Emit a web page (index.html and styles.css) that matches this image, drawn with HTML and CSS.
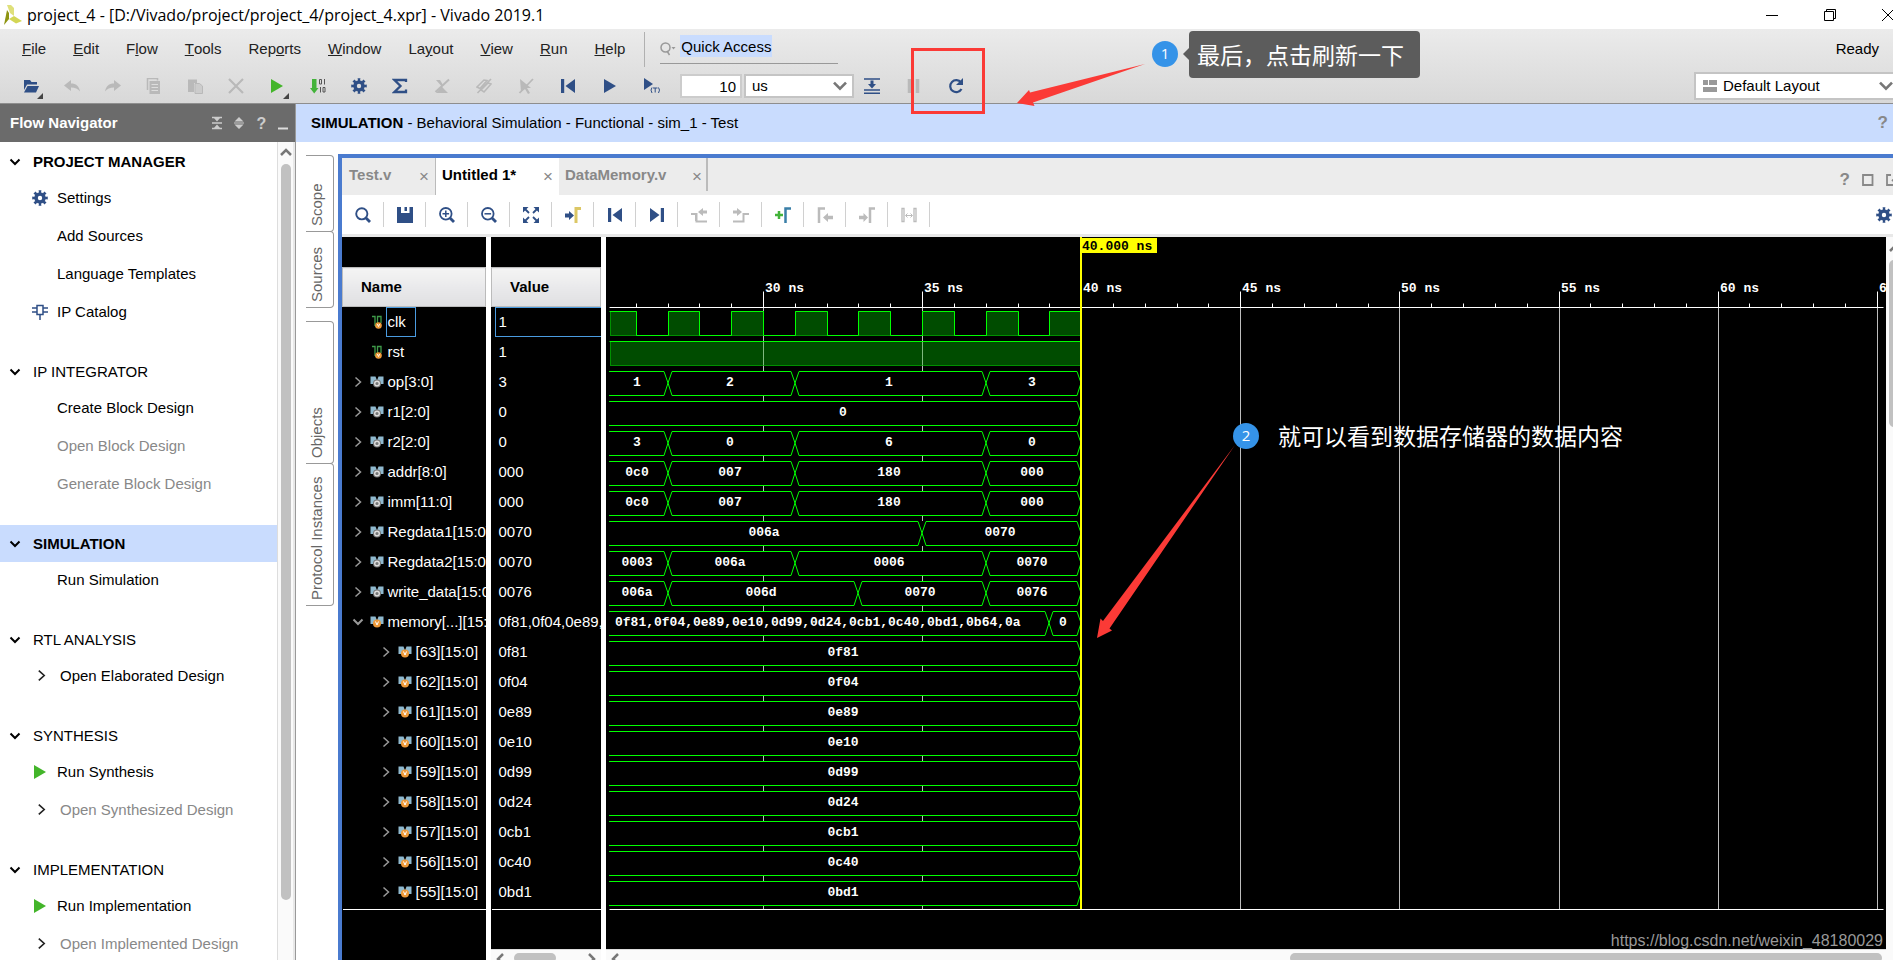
FILE: index.html
```html
<!DOCTYPE html>
<html lang="en">
<head>
<meta charset="utf-8">
<title>project_4 - Vivado 2019.1</title>
<link rel="stylesheet" href="styles.css">
</head>
<body>
<svg class="defs" aria-hidden="true">
  <defs>
    <symbol id="gear" viewBox="0 0 16 16"><circle cx="8" cy="8" r="4" fill="none" stroke="currentColor" stroke-width="3.6"/><circle cx="8" cy="8" r="6.4" fill="none" stroke="currentColor" stroke-width="2.8" pathLength="16" stroke-dasharray="1 1" stroke-dashoffset=".5"/></symbol>
    <symbol id="down" viewBox="0 0 12 12"><path d="M1.5 3.5 6 8l4.5-4.5" fill="none" stroke="currentColor" stroke-width="2"/></symbol>
    <symbol id="right" viewBox="0 0 12 12"><path d="M3.5 1.5 8.500 6l-5 4.500" fill="none" stroke="currentColor" stroke-width="1.5"/></symbol>
    <symbol id="play" viewBox="0 0 16 16"><path d="M2 1 14 8 2 15z" fill="currentColor"/></symbol>
    <symbol id="first" viewBox="0 0 16 16"><path d="M1 1h3.200v14H1zM15 1v14L5.500 8z" fill="currentColor"/></symbol>
    <symbol id="last" viewBox="0 0 16 16"><path d="M15 1h-3.200v14H15zM1 1v14l9.500-7z" fill="currentColor"/></symbol>
    <symbol id="chip" viewBox="0 0 16 16"><path d="M5 1.500h6v9H5zM8 10.500V16M0 4h5M0 8h5M11 4h5M11 8h5" fill="none" stroke="currentColor" stroke-width="1.500"/></symbol>
    <symbol id="bit" viewBox="0 0 12 14"><path d="M1 1.500h3v9.500M6.500 11V1.500h3.500V8M4 11h3" fill="none" stroke="#3f9b4a" stroke-width="1.300"/><circle cx="7.500" cy="10.500" r="3.300" fill="#ee9a3a"/><path d="m6.300 9 1.200 2.500L8.700 9" fill="none" stroke="#fff" stroke-width=".9"/></symbol>
    <symbol id="busin" viewBox="0 0 14 12"><path d="M.5.5h5L7 4.500 8.500.5h5v7.500H.5z" fill="#8fb9cf"/><circle cx="7" cy="7.500" r="4" fill="#777"/><circle cx="7" cy="7.500" r="2.300" fill="none" stroke="#ddd" stroke-width="1.400"/></symbol>
    <symbol id="busvar" viewBox="0 0 14 12"><path d="M.5.5h5L7 4.500 8.500.5h5v7.500H.5z" fill="#8fb9cf"/><circle cx="7" cy="7.500" r="4" fill="#ee9a3a"/><path d="M5.500 5.500 7 9l1.500-3.500" fill="none" stroke="#fff" stroke-width="1"/></symbol>
  </defs>
</svg>

<header class="titlebar">
  <svg class="logo" viewBox="0 0 20 20"><path d="M5 0h4l3 3v8L8 8z" fill="#dfe07a"/><path d="M5 5 7 8v6l-5 6z" fill="#8e9410"/><path d="m7 14 5-3 8 5-6 2.500z" fill="#d3d655"/></svg>
  <h1>project_4 - [D:/Vivado/project/project_4/project_4.xpr] - Vivado 2019.1</h1>
  <div class="winbtns">
    <button aria-label="Minimize"><svg viewBox="0 0 12 12"><path d="M0 6.500h12" stroke="#000"/></svg></button>
    <button aria-label="Restore"><svg viewBox="0 0 12 12"><path d="M.5 2.500h9v9h-9zM2.500 2.500v-2h9v9h-2" fill="none" stroke="#000"/></svg></button>
    <button aria-label="Close"><svg viewBox="0 0 12 12"><path d="m0 0 12 12M12 0 0 12" stroke="#000"/></svg></button>
  </div>
</header>

<div class="chrome">
  <div class="menurow">
    <nav class="menus">
      <button><u>F</u>ile</button><button><u>E</u>dit</button><button>F<u>l</u>ow</button><button><u>T</u>ools</button><button>Rep<u>o</u>rts</button><button><u>W</u>indow</button><button>La<u>y</u>out</button><button><u>V</u>iew</button><button><u>R</u>un</button><button><u>H</u>elp</button>
    </nav>
    <div class="quick">
      <svg viewBox="0 0 16 14"><circle cx="5.500" cy="5.500" r="4.500" fill="none" stroke="#999" stroke-width="1.500"/><path d="m7 9 2.500 4" stroke="#999" stroke-width="1.500"/><path d="M11.500 5h4l-2 2.500z" fill="#999"/></svg>
      <input type="text" aria-label="Quick Access" value="Quick Access">
    </div>
    <span class="ready">Ready</span>
  </div>
  <div class="toolrow">
    <div class="tools a">
      <button class="more" aria-label="Open"><svg viewBox="0 0 16 16"><path d="M1 2h6l1.500 2H14v2.500H4L1 12z" fill="#2f4f86"/><path d="M4.500 8H16l-3 6.500H1z" fill="#2f4f86"/></svg></button>
      <button aria-label="Undo"><svg viewBox="0 0 16 16"><path d="M0 7.500 7 2v3.500c5 0 8 2.500 9 8C14 11 11 9.500 7 9.500V13z" fill="#b9b9b9"/></svg></button>
      <button aria-label="Redo"><svg viewBox="0 0 16 16"><path d="M16 7.500 9 2v3.500c-5 0-8 2.500-9 8C2 11 5 9.500 9 9.500V13z" fill="#b9b9b9"/></svg></button>
      <button aria-label="Copy"><svg viewBox="0 0 16 16"><path d="M1.500 12V.5h10v2" fill="none" stroke="#b9b9b9" stroke-width="1.500"/><path d="M3.500 3H14v13H3.500z" fill="#b9b9b9"/><path d="M5.500 6.500H12M5.500 9.500H12M5.500 12.500H12" stroke="#ddd"/></svg></button>
      <button aria-label="Paste"><svg viewBox="0 0 16 16"><path d="M1 1.500h9V5H7v9H1z" fill="#b9b9b9"/><path d="M8 5.500h4.500L15.500 8v7.500H8z" fill="#ccc" stroke="#b9b9b9"/></svg></button>
      <button aria-label="Delete"><svg viewBox="0 0 16 16"><path d="m1 1 14 14M15 1 1 15" stroke="#b9b9b9" stroke-width="2.200"/></svg></button>
      <button class="more green" aria-label="Run"><svg><use href="#play"/></svg></button>
      <button aria-label="Generate bitstream"><svg viewBox="0 0 16 16"><path d="M2 1h4.500v9H8.500L4.200 15.500 0 10h2z" fill="#43b33a"/><path d="M9.500 1.500h2V6h-2zM14.500 1v5.500M10.500 9v5.500M13 9.500h2V14h-2z" fill="none" stroke="#555"/></svg></button>
      <button aria-label="Settings"><svg><use href="#gear"/></svg></button>
    </div>
    <div class="tools b">
      <button aria-label="Report"><svg viewBox="0 0 16 16"><path d="M14 4V2H2.500l6 6-6 6H14v-2.500" fill="none" stroke="#2f4f86" stroke-width="2.300"/></svg></button>
      <button aria-label="Clear marks"><svg viewBox="0 0 16 16"><path d="M2 2h4l3 5-7 8h12l-4-4z" fill="#b9b9b9"/><path d="M1.500 14 15 1.500" stroke="#b9b9b9" stroke-width="2"/></svg></button>
      <button aria-label="Link"><svg viewBox="0 0 16 16"><path d="m1 9 7-7 3 .5-7 8zM5 12l7-7 3 1-7 8zM1.500 15 15 1" fill="none" stroke="#b9b9b9" stroke-width="1.600"/></svg></button>
      <button aria-label="Unselect"><svg viewBox="0 0 16 16"><path d="m2 1 11 9H9l3 5-2 1-3-5-4 3z" fill="#b9b9b9"/><path d="M1.500 15 15 1" stroke="#b9b9b9" stroke-width="1.800"/></svg></button>
      <button aria-label="Restart"><svg><use href="#first"/></svg></button>
      <button aria-label="Run all"><svg><use href="#play"/></svg></button>
      <button aria-label="Run for time"><svg viewBox="0 0 16 16"><path d="m0 0 9 6-9 6z" fill="#2f4f86"/><path d="M8 9.500q-2 2.500 0 5.500M9 10h4.500M11.200 10v4.500M14.500 9.500q2 2.500 0 5.500" fill="none" stroke="#2f4f86"/></svg></button>
    </div>
    <input class="time" type="text" aria-label="Run time" value="10">
    <div class="pick unit"><select aria-label="Time unit"><option>us</option></select><svg><use href="#down"/></svg></div>
    <div class="tools c">
      <button aria-label="Step"><svg viewBox="0 0 16 16"><path d="M0 1h16M0 12h16M0 15.200h16" stroke="#2f4f86" stroke-width="1.500"/><path d="M6.500 2.500h3v3.500H12l-4 4.500L4 6h2.500z" fill="#2f4f86"/></svg></button>
      <button aria-label="Break"><svg viewBox="0 0 16 16"><path d="M3.500 1v14M11.500 1v14" stroke="#b9b9b9" stroke-width="3.500"/></svg></button>
      <button aria-label="Relaunch"><svg viewBox="0 0 16 16"><path d="M13 4.500A6 6 0 1 0 13.500 11" fill="none" stroke="#2f4f86" stroke-width="2.200"/><path d="M15 0v7H8z" fill="#2f4f86"/></svg></button>
    </div>
    <div class="pick layout"><svg class="lead" viewBox="0 0 14 12"><path d="M0 0h5v5H0zM6 0h8v5H6zM0 7h14v5H0z" fill="#999"/></svg><select aria-label="Layout"><option>Default Layout</option></select><svg><use href="#down"/></svg></div>
  </div>
</div>

<main class="work">
  <aside class="flow">
    <div class="flowhead"><h2>Flow Navigator</h2>
      <button aria-label="Collapse all"><svg viewBox="0 0 12 14"><path d="M1 1.500h10M1 7h10M1 12.500h10" stroke="#ccc" stroke-width="1.300"/><path d="M3 2h6L6 5.500zM3 12h6L6 8.500z" fill="#ccc"/></svg></button>
      <button aria-label="Expand all"><svg viewBox="0 0 12 14"><path d="M1.500 5.500 6 1l4.500 4.500zM1.500 8.500 6 13l4.500-4.500zM1 6.500h10v1H1z" fill="#ccc"/></svg></button>
      <button aria-label="Help">?</button>
      <button aria-label="Minimize"><svg viewBox="0 0 12 14"><path d="M1 12.500h10" stroke="#ddd" stroke-width="2"/></svg></button>
    </div>
    <div class="flowbody">
      <div class="sections">
        <section><h3 class="on"><svg><use href="#down"/></svg>PROJECT MANAGER</h3>
          <ul><li><svg class="blue"><use href="#gear"/></svg>Settings</li><li>Add Sources</li><li>Language Templates</li><li><svg class="blue"><use href="#chip"/></svg>IP Catalog</li></ul></section>
        <section><h3><svg><use href="#down"/></svg>IP INTEGRATOR</h3>
          <ul><li>Create Block Design</li><li class="off">Open Block Design</li><li class="off">Generate Block Design</li></ul></section>
        <section><h3 class="on band"><svg><use href="#down"/></svg>SIMULATION</h3>
          <ul><li>Run Simulation</li></ul></section>
        <section><h3><svg><use href="#down"/></svg>RTL ANALYSIS</h3>
          <ul><li class="sub"><svg><use href="#right"/></svg>Open Elaborated Design</li></ul></section>
        <section><h3><svg><use href="#down"/></svg>SYNTHESIS</h3>
          <ul><li><svg class="green"><use href="#play"/></svg>Run Synthesis</li><li class="sub off"><svg><use href="#right"/></svg>Open Synthesized Design</li></ul></section>
        <section><h3><svg><use href="#down"/></svg>IMPLEMENTATION</h3>
          <ul><li><svg class="green"><use href="#play"/></svg>Run Implementation</li><li class="sub off"><svg><use href="#right"/></svg>Open Implemented Design</li></ul></section>
      </div>
      <div class="vbar"><svg viewBox="0 0 12 12"><path d="M1 9l5-5 5 5" fill="none" stroke="#777" stroke-width="2.500"/></svg><i></i></div>
    </div>
  </aside>

  <div class="sim">
    <div class="simhead"><span><b>SIMULATION</b> - Behavioral Simulation - Functional - sim_1 - Test</span><button aria-label="Help">?</button></div>
    <div class="simbody">
      <nav class="sidetabs">
        <button class="s1">Scope</button><button class="s1">Sources</button><button class="s2 apart">Objects</button><button class="s2">Protocol Instances</button>
      </nav>
      <div class="panel">
        <div class="tabs">
          <div class="tab t1"><span>Test.v</span><button aria-label="Close Test.v">×</button></div>
          <div class="tab t2 cur"><span>Untitled 1*</span><button aria-label="Close Untitled 1">×</button></div>
          <div class="tab t3"><span>DataMemory.v</span><button aria-label="Close DataMemory.v">×</button></div>
          <div class="tabtools">
            <button aria-label="Help">?</button>
            <button aria-label="Maximize"><svg viewBox="0 0 12 12"><path d="M1 1h9.500v10H1z" fill="none" stroke="#888" stroke-width="1.800"/></svg></button>
            <button aria-label="Float"><svg viewBox="0 0 12 12"><path d="M5 1H1v10h10V8M6 7l5-5M7.500 1H12v4" fill="none" stroke="#888" stroke-width="1.800"/></svg></button>
          </div>
        </div>
        <div class="wavetools">
          <button aria-label="Find"><svg viewBox="0 0 16 16"><circle cx="6.800" cy="6.800" r="5.600" fill="none" stroke="#2f4f86" stroke-width="1.900"/><path d="m11 11 4 4" stroke="#2f4f86" stroke-width="2.800"/></svg></button>
          <button aria-label="Save"><svg viewBox="0 0 16 16"><path d="M0 0h16v16H0z" fill="#2f4f86"/><path d="M4 0h8.500v6H4z" fill="#fff"/><path d="M7.500 0h2.500v4H7.500z" fill="#2f4f86"/></svg></button>
          <button aria-label="Zoom in"><svg viewBox="0 0 16 16"><circle cx="6.800" cy="6.800" r="5.800" fill="none" stroke="#2f4f86" stroke-width="1.800"/><path d="m11 11 4 4" stroke="#2f4f86" stroke-width="2.800"/><path d="M3.500 6.800h6.600M6.800 3.500v6.600" stroke="#2f4f86" stroke-width="1.500"/></svg></button>
          <button aria-label="Zoom out"><svg viewBox="0 0 16 16"><circle cx="6.800" cy="6.800" r="5.800" fill="none" stroke="#2f4f86" stroke-width="1.800"/><path d="m11 11 4 4" stroke="#2f4f86" stroke-width="2.800"/><path d="M3.500 6.800h6.600" stroke="#2f4f86" stroke-width="1.500"/></svg></button>
          <button aria-label="Zoom fit"><svg viewBox="0 0 16 16"><path d="M0 0h5.500L0 5.500zM16 0v5.500L10.500 0zM0 16v-5.500L5.500 16zM16 16h-5.500l5.500-5.500z" fill="#2f4f86"/><path d="m2 2 4 4M14 2l-4 4M2 14l4-4M14 14l-4-4" stroke="#2f4f86" stroke-width="1.800"/></svg></button>
          <button aria-label="Go to cursor"><svg viewBox="0 0 16 16"><path d="M0 6.500h4V4l5 4.500L4 13v-2.500H0z" fill="#2f4f86"/><path d="M11 16V1.500h5" fill="none" stroke="#dcc765" stroke-width="3"/></svg></button>
          <button aria-label="Go to start"><svg><use href="#first"/></svg></button>
          <button aria-label="Go to end"><svg><use href="#last"/></svg></button>
          <button aria-label="Previous transition"><svg viewBox="0 0 16 16"><path d="M0 7h5.500v7.500H16M5 7v7" fill="none" stroke="#bbb" stroke-width="2"/><path d="m7 5 5-4v2.500h4v3h-4V9z" fill="#bbb"/></svg></button>
          <button aria-label="Next transition"><svg viewBox="0 0 16 16"><path d="M0 14.500h10.500V7H16" fill="none" stroke="#bbb" stroke-width="2"/><path d="M9 5 4 1v2.500H0v3h4V9z" fill="#bbb"/></svg></button>
          <button aria-label="Add marker"><svg viewBox="0 0 16 16"><path d="M4 4v8M0 8h8" stroke="#43b33a" stroke-width="2.500"/><path d="M10.500 16V1.500H16" fill="none" stroke="#3a7fa8" stroke-width="2.500"/></svg></button>
          <button aria-label="Previous marker"><svg viewBox="0 0 16 16"><path d="M2 16V1.500h6" fill="none" stroke="#bbb" stroke-width="2.500"/><path d="m6 10.500 5-4.500v2.800h5v3.400h-5V15z" fill="#bbb"/></svg></button>
          <button aria-label="Next marker"><svg viewBox="0 0 16 16"><path d="M11 16V1.500h5" fill="none" stroke="#bbb" stroke-width="2.500"/><path d="M9 10.500 4.500 6v2.800H0v3.400h4.500V15z" fill="#bbb"/></svg></button>
          <button aria-label="Swap cursors"><svg viewBox="0 0 16 16"><path d="M1 1.500h2v13H1zM13 1.500h2v13h-2z" fill="none" stroke="#bbb" stroke-width="1.300"/><path d="M5 8.500h6M6.500 6.500l-2 2 2 2M9.500 6.500l2 2-2 2" fill="none" stroke="#bbb"/></svg></button>
          <button class="opts" aria-label="Waveform options"><svg><use href="#gear"/></svg></button>
        </div>
        <div class="viewer">
          <div class="col names"><table><thead><tr><th>Name</th></tr></thead><tbody id="names"></tbody></table></div>
          <div class="col values"><div class="fill"><table><thead><tr><th>Value</th></tr></thead><tbody id="values"></tbody></table></div>
            <div class="hbar"><svg viewBox="0 0 12 12"><path d="M9 1 4 6l5 5" fill="none" stroke="#777" stroke-width="2.500"/></svg><i></i><svg viewBox="0 0 12 12"><path d="m3 1 5 5-5 5" fill="none" stroke="#777" stroke-width="2.500"/></svg></div></div>
          <div class="col wave"><svg id="wave" role="img" aria-label="Waveforms"></svg>
            <div class="hbar"><svg viewBox="0 0 12 12"><path d="M9 1 4 6l5 5" fill="none" stroke="#777" stroke-width="2.500"/></svg><i></i></div></div>
          <div class="edgebar"><svg viewBox="0 0 12 12"><path d="M1 9l5-5 5 5" fill="none" stroke="#777" stroke-width="2.500"/></svg><i></i></div>
        </div>
      </div>
    </div>
  </div>
</main>

<div class="notes">
  <svg class="arrows"><path d="m1145 64-115 28.500-1-2.500-12 13 17.500 3-1.500-3.500z" fill="#fb3a36"/><path d="m1235 445-132 176-2.500-2.500-3.500 19.500 15-7.500-2.500-2z" fill="#fb3a36"/></svg>
  <div class="frame"></div>
  <div class="badge n1">1</div>
  <div class="tip">最后，点击刷新一下</div>
  <div class="badge n2">2</div>
  <div class="caption">就可以看到数据存储器的数据内容</div>
  <div class="mark">https://blog.csdn.net/weixin_48180029</div>
</div>
<script src="wave.js"></script>
</body>
</html>
```
FILE: wave.js
```js
// Signals: name, value, kind, [end time, text] segments
const signals = [
  ['clk', '1', 'bit', []],
  ['rst', '1', 'bit', []],
  ['op[3:0]', '3', 'in', [[27, '1'], [31, '2'], [37, '1'], [40, '3']]],
  ['r1[2:0]', '0', 'in', [[40, '0']]],
  ['r2[2:0]', '0', 'in', [[27, '3'], [31, '0'], [37, '6'], [40, '0']]],
  ['addr[8:0]', '000', 'in', [[27, '0c0'], [31, '007'], [37, '180'], [40, '000']]],
  ['imm[11:0]', '000', 'in', [[27, '0c0'], [31, '007'], [37, '180'], [40, '000']]],
  ['Regdata1[15:0]', '0070', 'in', [[35, '006a'], [40, '0070']]],
  ['Regdata2[15:0]', '0070', 'in', [[27, '0003'], [31, '006a'], [37, '0006'], [40, '0070']]],
  ['write_data[15:0]', '0076', 'in', [[27, '006a'], [33, '006d'], [37, '0070'], [40, '0076']]],
  ['memory[...][15:0]', '0f81,0f04,0e89,0', 'mem', [[39, '0f81,0f04,0e89,0e10,0d99,0d24,0cb1,0c40,0bd1,0b64,0a'], [40, '0']]],
];
['0f81', '0f04', '0e89', '0e10', '0d99', '0d24', '0cb1', '0c40', '0bd1'].forEach((v, i) =>
  signals.push([`[${63 - i}][15:0]`, v, 'word', [[40, v]]]));

const icon = (id, cls) => `<svg class="${cls}"><use href="#${id}"/></svg>`;
const glyph = { bit: 'bit', in: 'busin', mem: 'busvar', word: 'busvar' };
document.getElementById('names').innerHTML = signals.map(([name, , kind], i) =>
  `<tr><td><div class="sig ${kind}${i ? '' : ' picked'}">` +
  (kind === 'bit' ? '<i class="chev"></i>' : icon(kind === 'mem' ? 'down' : 'right', 'chev')) +
  icon(glyph[kind], 'kind') + `<span>${name}</span></div></td></tr>`).join('');
document.getElementById('values').innerHTML = signals.map(([, value], i) =>
  `<tr><td><div class="val${i ? '' : ' picked'}">${value}</div></td></tr>`).join('');

// Waveform canvas: time in ns to x, row number to y
const LEFT = 3, AXIS = 70, ROW = 30, END = 672;
const X = t => Math.round(157 + (t - 30) * 31.82);
const line = (x1, y1, x2, y2, c) => `<path class="${c}" d="M${x1 + .5} ${y1 + .5}L${x2 + .5} ${y2 + .5}"/>`;
const text = (x, y, s, c = '') => `<text class="${c}" x="${x}" y="${y}">${s}</text>`;
let out = '';
for (let t = 30; t <= 65; t += 5) {
  if (t !== 40) out += line(X(t), AXIS, X(t), END, 'grid');
}
signals.forEach(([, , kind, segs], i) => {
  const top = AXIS + ROW * i + 4, bot = top + 24, mid = top + 12, end = X(40);
  if (i === 0) {
    let d = `M${LEFT + .5} ${top + .5}`;
    for (let t = 26; t < 40; t++) {
      const y = t % 2 ? top : bot;
      d += `H${X(t) + .5}V${y + .5}`;
    }
    for (let t = 25; t < 40; t += 2) {
      const x = Math.max(X(t), LEFT + 1);
      out += `<rect class="high" x="${x + .5}" y="${top + .5}" width="${X(t + 1) - x}" height="24"/>`;
    }
    out += `<path class="edge" d="${d}H${end}"/>`;
  } else if (i === 1) {
    out += `<rect class="high" x="${LEFT + 1.5}" y="${top + .5}" width="${end - LEFT - 2}" height="24"/>`;
    out += line(X(30), top, X(30), bot, 'glow') + line(X(35), top, X(35), bot, 'glow') + line(LEFT, top, end - 1, top, 'edge');
  } else {
    out += `<rect x="${LEFT}" y="${top}" width="${end - LEFT}" height="25"/>`;
    let from = LEFT;
    segs.forEach(([t, label], n) => {
      const to = X(t);
      const a = n ? 4 : 0;
      out += `<path class="edge" d="M${from + (n ? 0 : .5)} ${n ? mid : top + .5}L${from + a} ${top + .5}H${to - 4}L${to} ${mid}L${to - 4} ${bot + .5}H${from + a}${n ? `L${from} ${mid}` : ''}"/>`;
      if (label.length > 20) out += text(9, mid + 3, label);
      else out += text(Math.round((from + to) / 2) - 2, mid + 3, label, 'mid');
      from = to;
    });
  }
});
out += line(LEFT, AXIS, 1277, AXIS, 'axis') + line(LEFT, END, 1277, END, 'axis');
for (let t = 26; t <= 65; t++) {
  const major = t % 5 === 0;
  out += line(X(t), AXIS - (major ? 16 : 4), X(t), AXIS, 'axis');
  if (major) out += text(X(t) + 2, AXIS - 15, `${t} ns`);
}
out += `<rect class="cursor" x="474" y="0" width="2" height="${END}"/><rect class="cursor" x="475" y="1" width="76" height="15"/>` + text(476, 13, '40.000 ns', 'dark');
document.getElementById('wave').innerHTML = out;
```
FILE: styles.css
```css
* { box-sizing: border-box; }
body { margin: 0; height: 100vh; display: flex; flex-direction: column; overflow: hidden; position: relative; background: #fff; color: #000; font: 15px/20px "Liberation Sans", Arial, sans-serif; }
button, input, select { font: inherit; color: inherit; border: 0; background: none; padding: 0; margin: 0; border-radius: 0; }
h1, h2, h3, ul { margin: 0; padding: 0; font-size: 15px; font-weight: normal; list-style: none; }
svg { flex: none; display: block; }
.defs { position: absolute; width: 0; height: 0; }
.blue { color: #2f4f86; }
.green { color: #43b52a; }

.titlebar { height: 29px; flex: none; display: flex; align-items: center; padding-left: 2px; }
.logo { width: 20px; height: 20px; margin-right: 5px; }
.titlebar h1 { font-family: "Open Sans", "Noto Sans", sans-serif; font-size: 16px; white-space: nowrap; }
.winbtns { margin-left: auto; margin-right: -1px; display: flex; gap: 46px; }
.winbtns svg { width: 12px; height: 12px; }

.chrome { height: 75px; flex: none; background: linear-gradient(#ebebeb, #d8d8d8); border-bottom: 1px solid #8e8e8e; }
.menurow { height: 40px; display: flex; align-items: center; padding-left: 22px; color: #222; }
.menus { display: flex; gap: 27px; font-kerning: none; }
.quick { position: relative; display: flex; align-items: center; height: 35px; margin-left: 19px; padding-left: 15px; border-left: 1px solid #b0b0b0; }
.quick svg { width: 16px; height: 14px; margin-right: 4px; }
.quick input { width: 92px; height: 22px; padding-left: 1px; margin-bottom: 6px; background: #c9dcfe; color: #000; }
.quick::after { content: ""; position: absolute; left: 15px; bottom: 3px; width: 178px; height: 1px; background: #999; }
.ready { margin-left: auto; margin-right: 14px; color: #000; }
.toolrow { height: 34px; display: flex; align-items: center; padding-left: 10px; }
.tools { display: flex; color: #2f4f86; }
.tools button { width: 41px; height: 30px; display: grid; place-items: center; position: relative; }
.tools.b button { width: 42px; }
.tools.c button { width: 42px; }
.tools svg { width: 16px; height: 16px; }
.tools .green { color: #43b52a; }
.more::after { content: ""; position: absolute; right: 8px; bottom: 2px; border: 3px solid #444; border-top-color: transparent; border-left-color: transparent; }
.time { width: 62px; height: 24px; margin-left: 7px; padding-right: 4px; text-align: right; background: #fff; border: 2px solid #ccc; }
.pick { position: relative; display: flex; align-items: center; background: #fff; border: 2px solid #c4c4c4; }
.pick select { appearance: none; flex: 1; height: 20px; padding: 0 0 0 6px; outline: 0; }
.pick > svg { width: 16px; height: 16px; color: #777; margin-right: 4px; }
.unit { width: 110px; height: 24px; margin-left: 2px; margin-right: -3px; }
.layout { width: 206px; flex: none; height: 28px; margin-left: auto; margin-right: -7px; padding-left: 7px; }
.pick > .lead { width: 14px; height: 12px; margin: 0; }

.work { flex: 1; min-height: 0; display: flex; }
.flow { width: 296px; flex: none; display: flex; flex-direction: column; border-right: 1px solid #999; }
.flowhead { height: 38px; flex: none; display: flex; align-items: center; gap: 9px; padding: 0 5px 0 10px; background: #6b6b6b; color: #ccc; font-weight: bold; }
.flowhead h2 { flex: 1; font-weight: bold; color: #fff; }
.flowhead svg { width: 12px; height: 14px; }
.flowhead button { width: 13px; height: 18px; font-size: 16px; }
.flowbody { flex: 1; min-height: 0; display: flex; }
.sections { flex: 1; padding-top: 1px; overflow: hidden; }
section { margin-bottom: 24px; }
h3 { height: 37px; display: flex; align-items: center; gap: 12px; padding-left: 9px; }
h3 svg { width: 12px; height: 12px; }
.on { font-weight: bold; }
.band { background: #c9dcfe; }
.flow ul { display: grid; gap: 3px; }
.flow li { height: 35px; display: flex; align-items: center; padding-left: 57px; white-space: nowrap; }
.flow li svg { width: 16px; height: 16px; margin: 0 9px 0 -25px; }
.flow li.sub { padding-left: 60px; }
.flow li.sub svg { width: 13px; height: 13px; margin: 0 12px 0 -25px; color: #222; }
.off { color: #888; }
.vbar { width: 18px; background: #fafafa; border-left: 1px solid #ddd; border-right: 2px solid #e8e8e8; display: flex; flex-direction: column; align-items: center; padding-top: 4px; }
.vbar svg { width: 12px; height: 12px; }
.vbar i { width: 10px; height: 736px; margin-top: 6px; border-radius: 5px; background: #c1c1c1; }

.sim { flex: 1; min-width: 0; display: flex; flex-direction: column; }
.simhead { height: 38px; flex: none; display: flex; align-items: center; justify-content: space-between; padding: 0 5px 0 15px; background: #c9dcfe; }
.simhead button, .tabtools button { color: #888; font-weight: bold; font-size: 17px; }
.simbody { flex: 1; min-height: 0; display: flex; padding-top: 12px; }
.sidetabs { width: 42px; flex: none; padding: 1px 4px 0 10px; }
.sidetabs button { display: block; width: 28px; margin-bottom: -1px; writing-mode: vertical-rl; transform: rotate(180deg); text-align: left; padding: 5px 0 0 6px; color: #666; border: 1px solid #999; border-right: 0; border-radius: 4px 0 0 4px; }
.sidetabs .s1 { height: 77px; }
.sidetabs .s2 { height: 143px; }
.sidetabs .apart { margin-top: 14px; }
.panel { flex: 1; min-width: 0; display: flex; flex-direction: column; border: solid #4a7bcf; border-width: 4px 0 0 4px; }
.tabs { height: 37px; flex: none; display: flex; background: #ececec; color: #888; }
.tab { display: flex; align-items: center; justify-content: space-between; padding: 0 5px 3px 7px; font-weight: bold; }
.tab button { width: 12px; font: 17px/20px "Liberation Sans", Arial, sans-serif; padding-top: 4px; color: #888; }
.t1 { width: 94px; border-right: 1px solid #bbb; }
.t2 { width: 123px; padding-left: 6px; }
.t3 { width: 149px; padding: 0 3px 0 6px; border-right: 2px solid #bbb; height: 33px; }
.cur { background: #fff; }
.cur span { color: #000; }
.tabtools { margin-left: auto; display: flex; align-items: center; gap: 12px; padding-top: 6px; margin-right: -5px; }
.tabtools svg { width: 12px; height: 12px; }
.wavetools { height: 42px; flex: none; display: flex; align-items: center; border-bottom: 3px solid #e8e8e8; color: #2f4f86; }
.wavetools button { width: 42px; height: 25px; display: grid; place-items: center; border-right: 1px solid #d0d0d0; }
.wavetools svg { width: 16px; height: 16px; }
.wavetools .opts { margin-left: auto; width: 18px; border: 0; }

.viewer { flex: 1; min-height: 0; display: flex; gap: 5px; }
.col { background: #000; color: #fff; overflow: hidden; display: flex; flex-direction: column; }
.names { width: 144px; flex: none; padding-top: 30px; }
.values { width: 110px; flex: none; padding-top: 30px; }
.wave { flex: 1; min-width: 0; }
.fill { flex: 1; min-height: 0; overflow: hidden; }
table { width: 100%; table-layout: fixed; border-collapse: collapse; border-bottom: 1px solid #fff; }
th { height: 39px; padding: 0 0 0 18px; text-align: left; color: #000; background: linear-gradient(#f4f4f4, #dfdfe2); border: 1px solid #bbb; }
td { padding: 0; height: 30px; }
tbody tr:last-child td { height: 32px; padding-bottom: 2px; }
.sig, .val { height: 30px; display: flex; align-items: center; white-space: nowrap; overflow: hidden; }
.sig { padding-left: 9px; }
.sig.word { padding-left: 37px; }
.chev { width: 12px; height: 12px; margin-right: 6px; color: #999; }
.kind { width: 14px; height: 14px; margin-right: 2px; }
.sig span { height: 30px; padding: 0 1px; border: 1px solid transparent; display: flex; align-items: center; }
.sig.picked span { border-color: #4a9be0; padding-right: 9px; }
.val { margin-left: 3px; padding-left: 3px; border: 1px solid transparent; border-right: 0; }
.val.picked { border-color: #4a9be0; }
#wave { width: 100%; flex: 1; min-height: 0; font: bold 13px "Liberation Mono", "Courier New", monospace; fill: #fff; overflow: hidden; }
#wave path { fill: none; stroke-width: 1; }
#wave rect { fill: #000; }
#wave .grid { stroke: #bdbdbd; }
#wave .glow { stroke: #7fb97f; }
#wave .axis { stroke: #fff; }
#wave .edge { stroke: #00ff00; }
#wave .high { fill: #004c00; stroke: #009000; }
#wave .cursor { fill: #ffff00; }
#wave .dark { fill: #000; }
#wave .mid { text-anchor: middle; }
.hbar { height: 11px; flex: none; display: flex; align-items: flex-start; justify-content: space-between; padding: 3px 3px 0; background: #fafafa; border-top: 1px solid #ddd; }
.hbar svg { width: 12px; height: 12px; }
.hbar i { height: 10px; border-radius: 5px; background: #c1c1c1; }
.values .hbar i { width: 42px; margin-right: 22px; }
.wave .hbar i { width: 592px; margin-right: 1px; }
.edgebar { width: 7px; margin-left: -5px; padding: 5px 0 0 3px; background: #fafafa; overflow: hidden; }
.edgebar svg { width: 12px; height: 12px; }
.edgebar i { display: block; width: 10px; height: 167px; margin-top: 6px; border-radius: 5px; background: #c1c1c1; }

.notes { position: absolute; inset: 0; pointer-events: none; overflow: hidden; font-family: "Noto Sans CJK SC", sans-serif; color: #fff; }
.arrows { position: absolute; width: 100%; height: 100%; }
.frame { position: absolute; left: 911px; top: 48px; width: 74px; height: 66px; border: 3px solid #fb3a36; }
.badge { position: absolute; width: 26px; height: 26px; border-radius: 50%; background: #3593e8; text-align: center; font: 15px/25px "Open Sans", sans-serif; }
.n1 { left: 1152px; top: 41px; }
.n2 { left: 1233px; top: 423px; }
.tip { position: absolute; left: 1189px; top: 31px; padding: 0 16px 0 8px; border-radius: 4px; background: #5c5c5c; font-size: 23px; line-height: 47px; }
.tip::before { content: ""; position: absolute; left: -6px; top: 17px; border: 6px solid transparent; border-width: 6px 6px 6px 0; border-right-color: #5c5c5c; }
.caption { position: absolute; left: 1278px; top: 418px; font-size: 23px; line-height: 34px; }
.mark { position: absolute; right: 10px; bottom: 9px; color: #999; font: 16px/20px "Liberation Sans", Arial, sans-serif; }
```
